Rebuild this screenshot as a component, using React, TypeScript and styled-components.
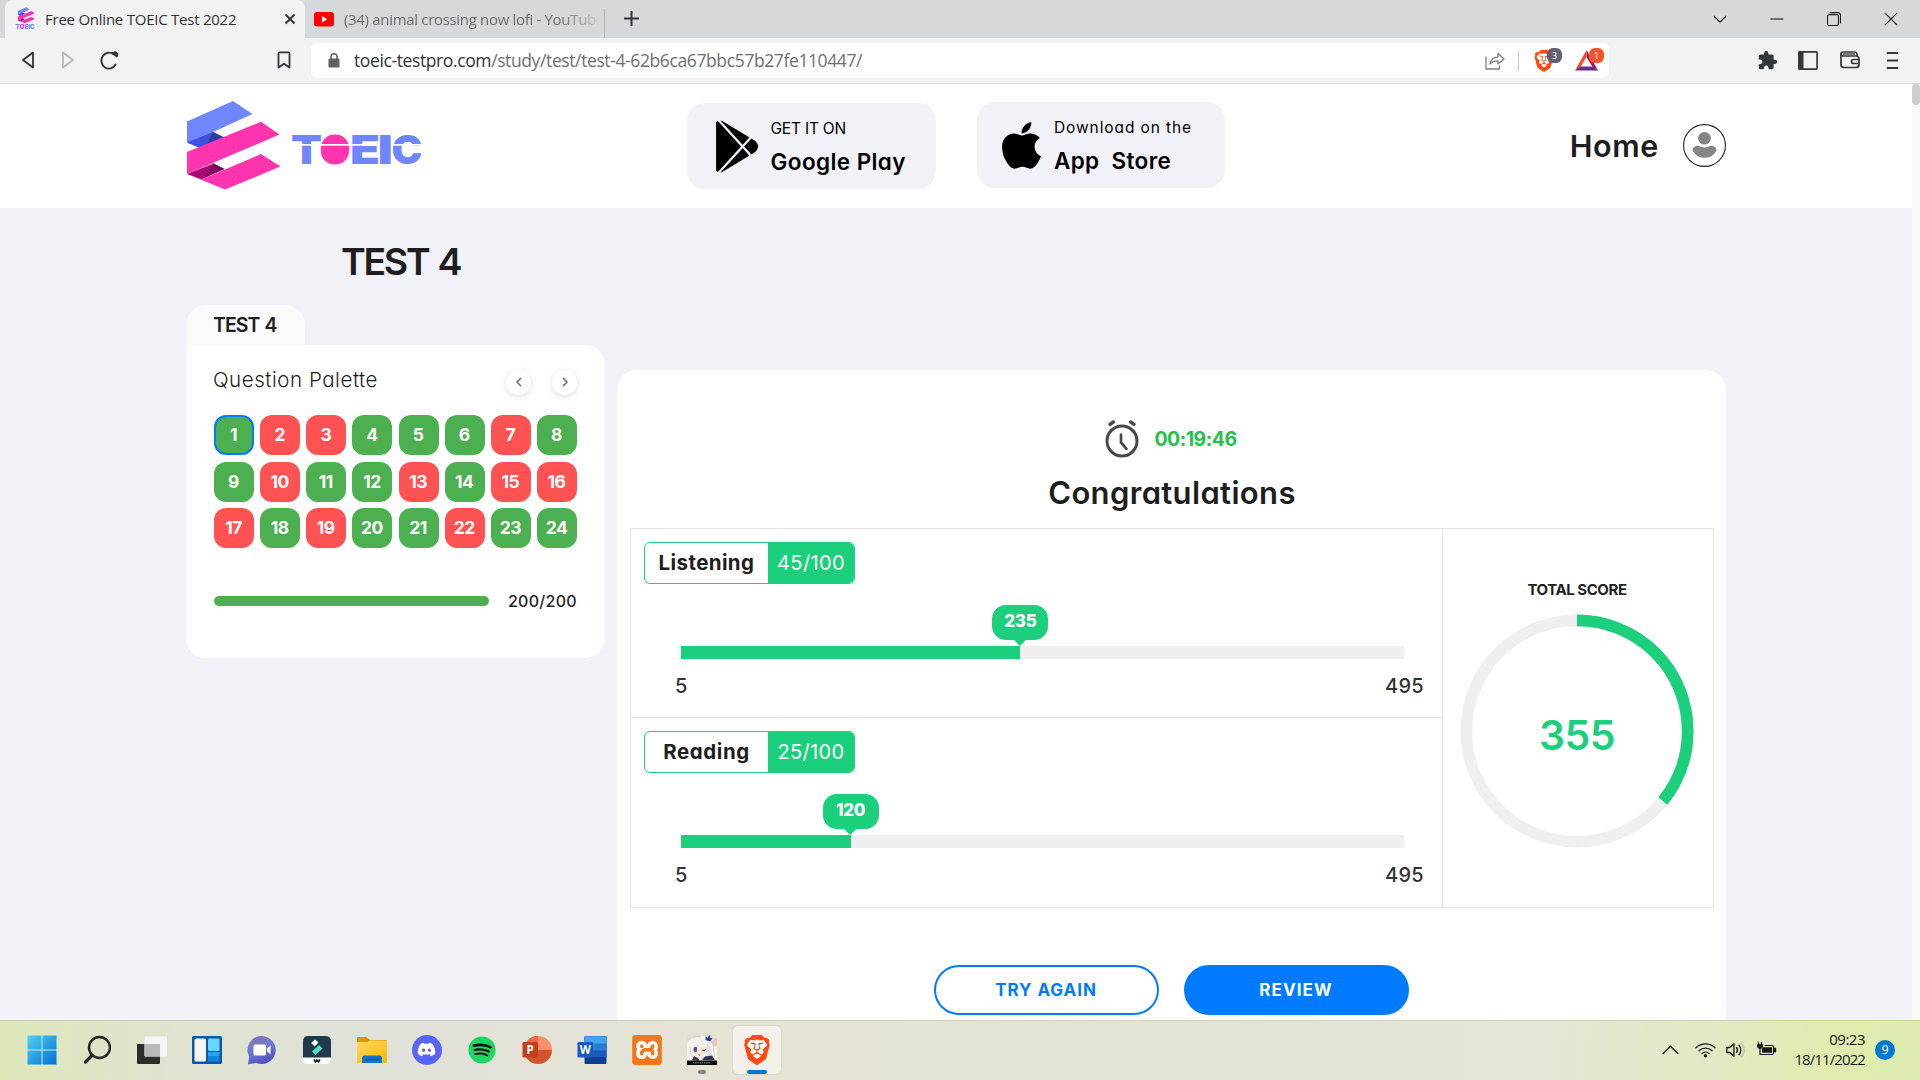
import React from 'react';
import styled, { createGlobalStyle, css } from 'styled-components';
import { SiBrave, SiXampp } from 'react-icons/si';
import { FaApple, FaDiscord, FaSpotify } from 'react-icons/fa';
import { MdExtension } from 'react-icons/md';

const GlobalStyle = createGlobalStyle`
  *, *::before, *::after { box-sizing: border-box; }
  body {
    margin: 0;
    overflow: hidden;
    font-family: Inter, "Open Sans", sans-serif;
    font-feature-settings: "cv11";
    color: #1e1e1e;
  }
  svg { display: block; flex: none; }
`;

const uiFont = css`
  font-family: "Open Sans", "Noto Sans", sans-serif;
  font-feature-settings: normal;
`;

const Screen = styled.div`
  width: 1920px;
  height: 1080px;
  overflow: hidden;
  display: flex;
  flex-direction: column;
`;

/* ---------- Browser chrome ---------- */

const TabStrip = styled.div`
  ${uiFont}
  height: 38px;
  flex: none;
  display: flex;
  align-items: stretch;
  background: #d5d9dc;
  padding-left: 5px;
  font-size: 15px;
`;

const ActiveTab = styled.div`
  width: 300px;
  display: flex;
  align-items: center;
  padding: 0 9px 1px 10px;
  gap: 10px;
  background: #f2f2f2;
  border-radius: 8px 8px 0 0;
  color: #2f3133;
`;

const TabTitle = styled.span`
  flex: 1;
  white-space: nowrap;
  letter-spacing: -0.24px;
`;

const IdleTab = styled.div`
  width: 299px;
  display: flex;
  align-items: center;
  padding: 0 0 1px 9px;
  gap: 10px;
  color: #6a6d70;
`;

const FadingTitle = styled.span`
  width: 253px;
  overflow: hidden;
  white-space: nowrap;
  letter-spacing: -0.32px;
  mask-image: linear-gradient(to right, #000 85%, transparent 103%);
`;

const TabDivider = styled.div`
  width: 1px;
  margin: 9px 0 0;
  background: #b2b5b8;
`;

const NewTab = styled.div`
  margin-left: 19px;
  display: flex;
  align-items: center;
  padding-bottom: 1px;
`;

const WindowControls = styled.div`
  margin-left: auto;
  display: flex;
  align-items: center;
  gap: 43px;
  padding: 0 22px 1px 0;
`;

const Toolbar = styled.div`
  ${uiFont}
  height: 46px;
  flex: none;
  display: flex;
  align-items: center;
  padding-left: 20px;
  background: #f2f2f2;
  border-bottom: 1px solid #d6d7d8;
`;

const NavButtons = styled.div`
  width: 291px;
  padding-bottom: 1px;
  display: flex;
  align-items: center;
  gap: 24px;
`;

const BookmarkSlot = styled.div`
  margin-left: auto;
  margin-right: 20px;
`;

const AddressBar = styled.div`
  width: 1298px;
  height: 35px;
  display: flex;
  align-items: center;
  padding: 0 5px 0 17px;
  background: #fff;
  border-radius: 6px;
`;

const Url = styled.div`
  margin-left: 14px;
  flex: 1;
  font-size: 17.5px;
  line-height: 32px;
  padding-bottom: 2px;
  letter-spacing: -0.39px;
  white-space: nowrap;
  color: #6c6f73;
`;

const Domain = styled.span`
  color: #303336;
`;

const AddressDivider = styled.div`
  width: 1px;
  height: 20px;
  margin: 0 14px 0 13px;
  background: #c8c8c8;
`;

const ShieldButton = styled.div<{ $w: number; $right?: number }>`
  position: relative;
  width: ${(p) => p.$w}px;
  height: 24px;
  margin-right: ${(p) => p.$right ?? 0}px;
  display: flex;
  align-items: center;
`;

const CountBadge = styled.span<{ $bg: string }>`
  position: absolute;
  top: -1px;
  right: 0;
  width: 15px;
  height: 15px;
  border-radius: 6px;
  background: ${(p) => p.$bg};
  color: #fff;
  font-size: 9.5px;
  line-height: 15px;
  text-align: center;
`;

const ToolbarActions = styled.div`
  margin-left: auto;
  padding: 0 22px 1px 0;
  display: flex;
  align-items: center;
`;

const ActionSlot = styled.div<{ $gap: number }>`
  margin-left: ${(p) => p.$gap}px;
`;

/* ---------- Page ---------- */

const Viewport = styled.div`
  height: 936px;
  flex: none;
  display: flex;
`;

const Page = styled.div`
  width: 1912px;
  height: 936px;
  overflow: hidden;
  background: #f1f2f7;
`;

const ScrollTrack = styled.div`
  width: 8px;
  background: #f9f9f9;
`;

const ScrollThumb = styled.div`
  height: 21px;
  border-radius: 4px;
  background: #cdcdcd;
`;

const Header = styled.header`
  height: 124px;
  display: flex;
  align-items: flex-start;
  padding: 17px 186px 0 187px;
  background: #fff;
`;

const Brand = styled.div`
  width: 500px;
`;

const StoreBadge = styled.div<{ $w: number; $pad: number; $gap: number }>`
  width: ${(p) => p.$w}px;
  height: 86px;
  margin-top: 2px;
  margin-right: 41px;
  padding-left: ${(p) => p.$pad}px;
  display: flex;
  align-items: center;
  gap: ${(p) => p.$gap}px;
  background: #f1f2f7;
  border-radius: 18px;
  color: #000;

  & + & { margin-top: 1px; }
`;

const StoreText = styled.div`
  display: flex;
  flex-direction: column;
  margin-bottom: 1px;
`;

const StoreHint = styled.span<{ $ls: number }>`
  font-size: 15.5px;
  line-height: 32px;
  letter-spacing: ${(p) => p.$ls}px;
  white-space: pre;
`;

const StoreName = styled.span<{ $ls: number }>`
  font-size: 22.5px;
  font-weight: 600;
  line-height: 33px;
  letter-spacing: ${(p) => p.$ls}px;
  white-space: pre;
`;

const HeaderNav = styled.nav`
  height: 84px;
  margin-top: 2.5px;
  margin-left: auto;
  display: flex;
  align-items: center;
  gap: 24px;
`;

const HomeLink = styled.a`
  font-size: 30.5px;
  font-weight: 600;
  letter-spacing: 0.6px;
  line-height: 40px;
`;

const PageTitle = styled.h1`
  height: 97px;
  margin: 0 0 0 341px;
  padding-top: 24px;
  font-size: 37.5px;
  font-weight: 600;
  line-height: 60px;
  letter-spacing: -2.3px;
  word-spacing: 2px;
`;

const Columns = styled.main`
  display: flex;
  align-items: flex-start;
  gap: 12px;
  padding-left: 186px;
`;

const Sidebar = styled.aside`
  width: 419px;
`;

const TestTab = styled.div`
  width: 119px;
  height: 40px;
  padding-left: 27px;
  background: #fafafa;
  border-radius: 20px 20px 0 0;
  font-size: 19.5px;
  font-weight: 600;
  line-height: 40px;
  letter-spacing: -0.95px;
  word-spacing: 1px;
`;

const PaletteCard = styled.section`
  height: 313px;
  padding: 22px 28px 0;
  background: #fff;
  border-radius: 0 20px 20px 20px;
`;

const PaletteHead = styled.div`
  display: flex;
  align-items: center;
  height: 30px;
`;

const PaletteTitle = styled.h2`
  margin: -4px auto 0 -1px;
  font-size: 20.5px;
  font-weight: 300;
  line-height: 26px;
  letter-spacing: 0.55px;
`;

const RoundButton = styled.button`
  width: 25px;
  height: 25px;
  margin: 0 0 0 21px;
  padding: 0;
  display: flex;
  align-items: center;
  justify-content: center;
  border: 0;
  border-radius: 50%;
  background: #fff;
  box-shadow: 0 2px 7px rgba(0, 0, 0, 0.13);
`;

const QuestionGrid = styled.div`
  margin-top: 18px;
  display: grid;
  grid-template-columns: repeat(8, 40px);
  justify-content: space-between;
  row-gap: 6.5px;
`;

const Question = styled.button<{ $ok: boolean; $current: boolean }>`
  height: 40px;
  padding: 0 1px 0 0;
  border: ${(p) => (p.$current ? '2px solid #007bff' : '0')};
  border-radius: 12px;
  background: ${(p) => (p.$ok ? '#4caf50' : '#ff5252')};
  color: #fff;
  font: 700 17.5px/36px Inter, sans-serif;
  letter-spacing: -0.5px;
  text-align: center;
`;

const Progress = styled.div`
  margin-top: 38px;
  display: flex;
  align-items: center;
  justify-content: space-between;
  height: 30px;
`;

const ProgressBar = styled.div`
  width: 275px;
  height: 10px;
  border-radius: 5px;
  background: #4caf50;
`;

const ProgressCount = styled.span`
  font-size: 16px;
  font-weight: 500;
  letter-spacing: 0.3px;
  color: #212529;
`;

const ResultCard = styled.section`
  width: 1109px;
  height: 700px;
  margin-top: 65px;
  padding: 49px 12px 0 13px;
  background: #fff;
  border-radius: 20px 20px 0 0;
`;

const Timer = styled.div`
  height: 39px;
  display: flex;
  align-items: center;
  justify-content: center;
  gap: 15px;
  padding-right: 2px;
`;

const TimeSpent = styled.span`
  font-size: 19.5px;
  font-weight: 700;
  letter-spacing: -0.5px;
  color: #28bf4b;
`;

const Congrats = styled.h2`
  margin: 15px 0 0;
  height: 55px;
  text-align: center;
  font-size: 31px;
  font-weight: 600;
  line-height: 40px;
  letter-spacing: 0.35px;
`;

const ScoreTable = styled.div`
  height: 380px;
  display: grid;
  grid-template-columns: 812px 1fr;
  border: 1px solid #e2e3e4;
`;

const Sections = styled.div`
  display: grid;
  grid-template-rows: 188px 1fr;
  border-right: 1px solid #e2e3e4;
`;

const Section = styled.div`
  padding: 13px 18px 0 13px;

  & + & { border-top: 1px solid #e2e3e4; }
`;

const Tag = styled.div`
  display: flex;
  width: fit-content;
  height: 42px;
  border: 1px solid #1bcf7c;
  border-radius: 6px;
  overflow: hidden;
`;

const TagName = styled.span<{ $ls: number }>`
  width: 123px;
  text-align: center;
  font-size: 20.5px;
  font-weight: 650;
  line-height: 40px;
  letter-spacing: ${(p) => p.$ls}px;
`;

const TagScore = styled.span`
  width: 86px;
  text-align: center;
  background: #1bcf7c;
  color: #fff;
  font-size: 20px;
  line-height: 40px;
  letter-spacing: 0.36px;
`;

const Meter = styled.div`
  width: 723px;
  height: 13px;
  margin: 62px 0 0 37px;
  background: #efefef;
`;

const MeterFill = styled.div`
  position: relative;
  height: 13px;
  background: #1bcf7c;
`;

const Bubble = styled.div`
  position: absolute;
  right: -28px;
  bottom: 19px;
  width: 56px;
  height: 35px;
  border-radius: 14px;
  background: #1bcf7c;
  color: #fff;
  text-align: center;
  font-size: 17px;
  font-weight: 800;
  line-height: 33px;
  letter-spacing: -0.3px;

  &::after {
    content: '';
    position: absolute;
    left: 20.5px;
    top: 34px;
    border: 7.5px solid transparent;
    border-top-color: #1bcf7c;
    border-bottom: 0;
  }
`;

const Bounds = styled.div`
  display: flex;
  justify-content: space-between;
  margin: 15px 0 0 31px;
  font-size: 20px;
  font-weight: 550;
  line-height: 24px;
  letter-spacing: 0.3px;
  color: #333;
`;

const Total = styled.div`
  padding: 51px 2px 0 0;
  display: flex;
  flex-direction: column;
  align-items: center;
`;

const TotalLabel = styled.div`
  font-size: 15px;
  font-weight: 650;
  line-height: 20px;
  letter-spacing: -0.44px;
`;

const Gauge = styled.div`
  margin-top: 14px;
  display: grid;
  place-items: center;

  & > * { grid-area: 1 / 1; }
`;

const TotalValue = styled.div`
  margin-top: 8px;
  font-size: 41px;
  font-weight: 600;
  letter-spacing: -0.6px;
  color: #1bcf7c;
`;

const Actions = styled.div`
  margin-top: 57px;
  padding-right: 2px;
  display: flex;
  justify-content: center;
  gap: 25px;
`;

const PillButton = styled.button<{ $solid?: boolean; $ls: number }>`
  width: 225px;
  height: 50px;
  padding: 0;
  border: 2px solid #007bff;
  border-radius: 25px;
  background: ${(p) => (p.$solid ? '#007bff' : '#fff')};
  color: ${(p) => (p.$solid ? '#fff' : '#007bff')};
  font: 700 17px/44px Inter, sans-serif;
  letter-spacing: ${(p) => p.$ls}px;
`;

/* ---------- Taskbar ---------- */

const TaskbarRow = styled.footer`
  ${uiFont}
  height: 60px;
  flex: none;
  display: flex;
  padding: 0 25px 0 14px;
  border-top: 1px solid rgba(120, 120, 100, 0.2);
  background: linear-gradient(95deg, #dde7b9 0%, #dfe3cf 9%, #e0e1d9 20%, #e4e2d6 30%, #e7e4d6 42%, #e4e4d4 55%, #e5e6d6 80%, #e3e9c4 89%, #dfecad 96%, #dcebb0 100%);
`;

const TaskItem = styled.div`
  width: 55.05px;
  height: 59px;
  padding-top: 5px;
  display: flex;
  flex-direction: column;
  align-items: center;
`;

const TaskTile = styled.div<{ $active?: boolean }>`
  width: 48px;
  height: 48px;
  display: grid;
  place-items: center;
  padding-bottom: 1px;
  border-radius: 5px;
  ${(p) =>
    p.$active &&
    css`
      background: #f3f1ea;
      box-shadow: 0 0 2px rgba(0, 0, 0, 0.18);
    `}
`;

const RunMark = styled.div<{ $active?: boolean }>`
  width: ${(p) => (p.$active ? 20 : 8)}px;
  height: 4px;
  margin-top: -4px;
  z-index: 1;
  border-radius: 2px;
  background: ${(p) => (p.$active ? '#0078d4' : '#85857f')};
`;

const TileLayer = styled.div<{ $bg?: string; $fg: string; $round?: number }>`
  width: 30px;
  height: 30px;
  display: grid;
  place-items: center;
  border-radius: ${(p) => p.$round ?? 0}px;
  background: ${(p) => p.$bg ?? 'none'};
  color: ${(p) => p.$fg};
`;

const Tray = styled.div`
  margin-left: auto;
  padding-bottom: 2px;
  display: flex;
  align-items: center;
  color: #1a1a1a;
`;

const TrayIcons = styled.div`
  display: flex;
  align-items: center;
  gap: 10px;
  margin-right: 17px;
`;

const Clock = styled.div`
  width: 71px;
  margin: 0 10px 2px 0;
  text-align: right;
  font-size: 15px;
  line-height: 20px;
`;

const Time = styled.div`
  letter-spacing: -0.5px;
`;

const DateText = styled.div`
  letter-spacing: -0.9px;
`;

const NoticeCount = styled.div`
  width: 20px;
  height: 20px;
  border-radius: 50%;
  background: #0078d4;
  color: #fff;
  text-align: center;
  font-size: 12.5px;
  line-height: 20px;
`;

/* ---------- Drawings ---------- */

const EMark = () => (
  <>
    <polygon points="0,20.5 46,0 65.5,13 26,31 37,36.5 13,47 0,41.5" fill="#7086ff" />
    <polygon points="0,41.5 26,31 37,36.5 13,47" fill="#3d52dc" />
    <polygon points="26,31 37,36.5 20,43" fill="#2c3ba6" />
    <polygon points="0,51 74,20.8 92.5,33.5 0,73" fill="#ff34ae" />
    <polygon points="0,73 26.5,62.5 37.5,68 14.5,78.5" fill="#a80a74" />
    <polygon points="26.5,62.5 37.5,68 18,76" fill="#85055c" />
    <polygon points="0,73 14.5,78.5 74,53 93.5,65.5 38,88.5" fill="#ff34ae" />
  </>
);

const Logo = () => (
  <svg width="236" height="90" viewBox="0 0 236 90">
    <EMark />
    <g fontFamily="Inter, sans-serif" fontWeight="900" fontSize="39.5" fill="#7086ff">
      <text x="104" y="63" textLength="31" lengthAdjust="spacingAndGlyphs">T</text>
      <text x="163" y="63" textLength="30" lengthAdjust="spacingAndGlyphs">E</text>
      <text x="190.5" y="63" textLength="15.5" lengthAdjust="spacingAndGlyphs">I</text>
      <text x="204.5" y="63" textLength="31" lengthAdjust="spacingAndGlyphs">C</text>
      <text x="133" y="63" textLength="30" lengthAdjust="spacingAndGlyphs" fill="#ff34ae" stroke="#ff34ae" strokeWidth="1">O</text>
      <ellipse cx="148" cy="48.7" rx="9" ry="11" fill="#ff34ae" />
    </g>
    <rect x="104" y="43" width="87" height="1.7" fill="#fff" />
    <rect x="205" y="43" width="30" height="1.7" fill="#fff" />
  </svg>
);

const Favicon = () => (
  <svg width="20" height="24" viewBox="0 0 110 130">
    <g transform="translate(16 0)">
      <EMark />
    </g>
    <g fontFamily="Inter, sans-serif" fontWeight="900" fontSize="32" fill="#7086ff">
      <text x="3" y="122" textLength="104" lengthAdjust="spacingAndGlyphs">
        T<tspan fill="#ff34ae">O</tspan>EIC
      </text>
    </g>
  </svg>
);

const YoutubeIcon = () => (
  <svg width="20" height="16" viewBox="0 0 20 16">
    <rect y="1" width="20" height="14.5" rx="3" fill="#f00" />
    <path d="M8 5l5.2 3.2L8 11.4z" fill="#fff" />
  </svg>
);

const CrossIcon = () => (
  <svg width="12" height="12" viewBox="0 0 12 12" stroke="#303336" strokeWidth="1.8">
    <path d="M1.5 1.5l9 9M10.5 1.5l-9 9" />
  </svg>
);

const PlusIcon = () => (
  <svg width="15" height="15" viewBox="0 0 15 15" stroke="#303336" strokeWidth="2">
    <path d="M7.5 0v15M0 7.5h15" />
  </svg>
);

const Caption = ({ d }: { d: string }) => (
  <svg width="14" height="14" viewBox="0 0 14 14" fill="none" stroke="#1b1b1b" strokeWidth="1.1">
    <path d={d} />
  </svg>
);

const BackIcon = ({ color, flip }: { color: string; flip?: boolean }) => (
  <svg width="16" height="18" viewBox="0 0 16 18" fill="none" stroke={color} strokeWidth="1.8" strokeLinejoin="round">
    <path d={flip ? 'M3 1.5v15l10-7.5z' : 'M13 1.5v15L3 9z'} />
  </svg>
);

const ReloadIcon = () => (
  <svg width="19" height="20" viewBox="0 0 19 20" fill="none" stroke="#303336" strokeWidth="1.9" strokeLinecap="round">
    <path d="M15.5 14.5A7.5 8 0 1 1 13.500 4.300" />
    <path d="M12.500 2.500q3-1.500 4.500 0t0 4.500q-3-1-4.500-4.500z" fill="#303336" strokeWidth="1" />
  </svg>
);

const BookmarkIcon = () => (
  <svg width="14" height="18" viewBox="0 0 14 18" fill="none" stroke="#303336" strokeWidth="1.8" strokeLinejoin="round">
    <path d="M1.5 2.5a1.2 1.2 0 0 1 1.2-1.2h8.6a1.2 1.2 0 0 1 1.2 1.2v14L7 12.7l-5.5 3.8z" />
  </svg>
);

const LockIcon = () => (
  <svg width="12" height="15" viewBox="0 0 12 15">
    <rect x="0.5" y="5.5" width="11" height="9" rx="1.2" fill="#5f6368" />
    <path d="M3 6V3.8a3 3 0 0 1 6 0V6" fill="none" stroke="#5f6368" strokeWidth="1.6" />
  </svg>
);

const ShareIcon = () => (
  <svg width="20" height="18" viewBox="0 0 20 18" fill="none" stroke="#7d8084" strokeWidth="1.3" strokeLinejoin="round">
    <path d="M1 4.5V17h13.5v-3.5" />
    <path d="M5 12c.6-4.200 3.500-6.700 8-6.900V1.200L19 7l-6 5V8.800c-3.700 0-6 .8-8 3.200z" />
  </svg>
);

const BatIcon = () => (
  <svg width="23" height="21" viewBox="0 0 23 21">
    <polygon points="11.500,0 0,20.500 5.500,17 11.500,7" fill="#ff4724" />
    <polygon points="11.500,0 23,20.500 17.500,17 11.500,7" fill="#9e1f63" />
    <polygon points="0,20.500 23,20.500 17.500,16.500 5.500,16.500" fill="#662d91" />
  </svg>
);

const PanelIcon = () => (
  <svg width="20" height="19" viewBox="0 0 20 19">
    <rect x="0.9" y="0.9" width="18.200" height="17.200" rx="1" fill="none" stroke="#34373a" strokeWidth="1.7" />
    <rect x="0.5" y="0.5" width="5" height="18" fill="#34373a" />
  </svg>
);

const WalletIcon = () => (
  <svg width="20" height="18" viewBox="0 0 20 18" fill="none" stroke="#34373a" strokeWidth="1.7">
    <path d="M1 3v10.500A3 3 0 0 0 4 16.500h12a3 3 0 0 0 3-3V8a3 3 0 0 0-3-3H3a2 2 0 0 1 0-4h11.500A2.500 2.500 0 0 1 17 3.500V5" />
    <path d="M3 3h12" strokeWidth="1.3" />
    <path d="M19 8.500h-5.500a2 2 0 0 0 0 4H19" />
  </svg>
);

const MenuIcon = () => (
  <svg width="11" height="17" viewBox="0 0 11 17" stroke="#34373a" strokeWidth="1.900">
    <path d="M0 1h11M0 8.500h11M0 16h11" />
  </svg>
);

const PlayIcon = () => (
  <svg width="45.500" height="55" viewBox="0 0 44 55" preserveAspectRatio="none">
    <path d="M1 3.500Q3 .5 7 2L39 22Q44.500 27.500 39 33L7 53Q3 54.500 1 51.500Z" fill="#000" />
    <path d="M2.500 0L36 38M2.500 55L36 17" stroke="#f1f2f7" strokeWidth="2.200" />
  </svg>
);

const AvatarIcon = () => (
  <svg width="43" height="43" viewBox="0 0 43 43">
    <circle cx="21.500" cy="21.500" r="20.900" fill="#fff" stroke="#222" strokeWidth="1.100" />
    <circle cx="21.500" cy="14.300" r="6.300" fill="#858585" />
    <path d="M15 21.500c2 1.300 4 1.900 6.500 1.900s4.500-.6 6.500-1.900c3 .2 5.300 2 5.600 4.700-2.600 5-6.900 7.600-12.100 7.600S12 31.200 9.400 26.200c.3-2.700 2.600-4.500 5.600-4.700z" fill="#858585" />
  </svg>
);

const ArrowIcon = ({ next }: { next?: boolean }) => (
  <svg width="8" height="10" viewBox="0 0 8 10" fill="none" stroke="#6a6a6a" strokeWidth="1.500">
    <path d={next ? 'M2 1l4 4-4 4' : 'M6 1L2 5l4 4'} />
  </svg>
);

const AlarmIcon = () => (
  <svg width="34" height="38" viewBox="0 0 34 38" fill="none" stroke="#484848" strokeLinecap="round">
    <circle cx="17" cy="21" r="15" strokeWidth="3" />
    <path d="M5 4.300L8.300 2M29 4.300L25.700 2" strokeWidth="3.400" />
    <path d="M16 14.500v8l5.500 6.300" strokeWidth="2.700" strokeLinejoin="round" />
  </svg>
);

const RADIUS = 110.7;
const TOTAL = 355;
const TOTAL_MAX = 990;

const GaugeRing = () => {
  const length = 2 * Math.PI * RADIUS;
  return (
    <svg width="234" height="234" viewBox="-117 -117 234 234" fill="none" strokeWidth="11.700">
      <circle r={RADIUS} stroke="#efefef" />
      <circle r={RADIUS} stroke="#1bcf7c" transform="rotate(-90)" strokeDasharray={`${(length * TOTAL) / TOTAL_MAX} ${length}`} />
    </svg>
  );
};

const WindowsIcon = () => (
  <svg width="30" height="30" viewBox="0 0 30 30">
    <defs>
      <linearGradient id="win" x1="0" y1="0" x2="1" y2="1">
        <stop offset="0" stopColor="#4fd0fb" />
        <stop offset="1" stopColor="#0370cc" />
      </linearGradient>
    </defs>
    <path d="M.5.5h14v14H.5zM15.500.5h14v14h-14zM.5 15.500h14v14H.5zM15.500 15.500h14v14h-14z" fill="url(#win)" />
  </svg>
);

const SearchIcon = () => (
  <svg width="28" height="30" viewBox="0 0 28 30" fill="none" stroke="#262626" strokeLinecap="round">
    <circle cx="16.500" cy="12.500" r="10.500" strokeWidth="2.400" />
    <path d="M9 20.500L2.500 27" strokeWidth="3.200" />
  </svg>
);

const TaskViewIcon = () => (
  <svg width="30" height="30" viewBox="0 0 30 30">
    <rect x="0" y="9" width="23" height="20" rx="1" fill="#2d2d2d" />
    <rect x="7.500" y="1.500" width="22.500" height="20" rx="1" fill="#f6f6f6" />
    <rect x="7.500" y="9" width="15.500" height="12.500" fill="#b9b9b9" />
  </svg>
);

const WidgetsIcon = () => (
  <svg width="30" height="28" viewBox="0 0 30 28">
    <rect width="30" height="28" rx="1.500" fill="#0c5aa6" />
    <rect x="2.500" y="2.500" width="11.500" height="23" rx="1.500" fill="#f5f5f5" />
    <rect x="16" y="2.500" width="11.500" height="12.500" rx="1" fill="#67d6fb" />
    <rect x="16" y="16" width="11.500" height="4.500" fill="#2aa5f5" />
    <rect x="16" y="21" width="11.500" height="4.500" fill="#0a84e8" />
  </svg>
);

const ChatIcon = () => (
  <svg width="30" height="30" viewBox="0 0 30 30">
    <defs>
      <linearGradient id="chat" x1="0.2" y1="0" x2="0.600" y2="1">
        <stop offset="0" stopColor="#8a6bb8" />
        <stop offset="0.400" stopColor="#6f7fd0" />
        <stop offset="1" stopColor="#4f4fc4" />
      </linearGradient>
    </defs>
    <path d="M15 1a14 14 0 1 1-5.500 27L1 29.200l1.200-7.500A14 14 0 0 1 15 1z" fill="url(#chat)" />
    <rect x="6.500" y="9.500" width="12.500" height="11" rx="1.500" fill="#fff" />
    <path d="M20 13.500l3.500-3v9l-3.500-3z" fill="#fff" />
  </svg>
);

const FilmoraIcon = () => (
  <svg width="28" height="28" viewBox="0 0 28 28">
    <rect width="28" height="28" rx="5" fill="#1f3a4a" />
    <path d="M0 21.500h28V24a4 4 0 0 1-4 4H4a4 4 0 0 1-4-4z" fill="#fff" />
    <path d="M12 3.500l3.500 3-3.800 4L8.200 7z" fill="#fff" />
    <path d="M16 9l3.500 3.500-7 6.500L9 15.500z" fill="#55dfc2" />
    <path d="M11 23.500l1.500 2.500 1.500-2 1.500 2 1.500-2.500" fill="none" stroke="#111" strokeWidth="1.500" />
  </svg>
);

const FolderIcon = () => (
  <svg width="30" height="28" viewBox="0 0 30 28">
    <defs>
      <linearGradient id="folder" x1="0" y1="0" x2="1" y2="1">
        <stop offset="0" stopColor="#ffd75e" />
        <stop offset="1" stopColor="#fbb70d" />
      </linearGradient>
    </defs>
    <path d="M0 2.500Q0 1 1.500 1H9.500l3.500 3H29q1 0 1 1v5H0z" fill="#d9980b" />
    <path d="M0 6h10l3-1.500h17V27H0z" fill="url(#folder)" />
    <path d="M5 27v-5q0-2.500 2.500-2.500h15Q25 19.500 25 22v5z" fill="#1272c4" />
    <path d="M8.500 23.500h13" stroke="#0b4f91" strokeWidth="1.200" />
  </svg>
);

const PowerPointIcon = () => (
  <svg width="30" height="30" viewBox="0 0 30 30">
    <path d="M16 1a14 14 0 1 0 14 14H16z" fill="#d35230" />
    <path d="M16 1a14 14 0 0 1 14 14H16z" fill="#ff8f6b" />
    <path d="M16 1A14 14 0 0 0 2 15h14z" fill="#ed6c47" />
    <rect x="0.500" y="7" width="15.500" height="15.500" rx="1.200" fill="#c43e1c" />
    <text x="8.200" y="19.200" textAnchor="middle" fontFamily="Open Sans, sans-serif" fontWeight="700" fontSize="11.500" fill="#fff">P</text>
  </svg>
);

const WordIcon = () => (
  <svg width="30" height="30" viewBox="0 0 30 30">
    <rect x="7.500" y="1.500" width="22" height="27.500" rx="1.200" fill="#103f91" />
    <rect x="7.500" y="1.500" width="22" height="20.500" fill="#185abd" />
    <rect x="7.500" y="1.500" width="22" height="14" fill="#2b7cd3" />
    <rect x="7.500" y="1.500" width="22" height="7" rx="1" fill="#41a5ee" />
    <rect x="0.500" y="7" width="15.500" height="15.500" rx="1.200" fill="#185abd" />
    <text x="8.200" y="19" textAnchor="middle" fontFamily="Open Sans, sans-serif" fontWeight="700" fontSize="11.500" fill="#fff">W</text>
  </svg>
);

const GameIcon = () => (
  <svg width="30" height="30" viewBox="0 0 30 30">
    <rect width="30" height="30" fill="#e4ddd2" />
    <path d="M0 9Q5 0 15 1t15 8v17H0z" fill="#f6f3ee" />
    <path d="M24 6l6-3v8l-4 1z" fill="#e9c8b4" />
    <path d="M6 11q6-4 14 1l.5 5q-3 6-7 6.500T6.500 18z" fill="#fbe7db" />
    <path d="M4 11q5-7 15-3l-3 4-2-2-3 4-1-3-3 3-1 6-4-2z" fill="#f3efec" />
    <path d="M20 8l4 5 1 10-4 2-2-6 1-5z" fill="#dedde6" />
    <path d="M6 3q4-3 8-1M3 12q0 7 3 11M26 13q2 5 1 10" fill="none" stroke="#c9c3c4" strokeWidth="0.800" />
    <path d="M6.500 13q2-2 3.500-.5v4q-2 1.200-3.300-.5z" fill="#4a4fa0" />
    <path d="M15 15q2 1.600 4-.6" fill="none" stroke="#4d3b49" strokeWidth="1" />
    <path d="M11 19.300l2.800.4-1.500 1.300z" fill="#b4555a" />
    <path d="M18.500 1.500l2 1.300L22.500 0l1 3 2 .5-2.500 3-4.500-1.500z" fill="#2c4596" />
    <path d="M15 25l3-3.500 7-1 3 5z" fill="#2f3557" />
    <path d="M5 25l2-4 5 3v2z" fill="#3a3a45" />
    <rect y="25.500" width="30" height="4.500" fill="#0a0a0a" />
    <path d="M6 27.800h18" stroke="#999" strokeWidth="1" strokeDasharray="1.500 0.700" />
  </svg>
);

const XamppTile = () => (
  <TileLayer $bg="#fff" $fg="#f0761f" $round={4}>
    <SiXampp size={30} />
  </TileLayer>
);

const SpotifyTile = () => (
  <TileLayer $fg="#1ed760">
    <svg width="28" height="28" viewBox="0 0 28 28">
      <circle cx="14" cy="14" r="12.500" fill="#111" />
      <FaSpotify size={28} />
    </svg>
  </TileLayer>
);

const BraveGlyph = ({ size }: { size: number }) => (
  <svg width={size} height={size} viewBox="0 0 30 30">
    <path d="M7 6h16l1.500 8-4 10-5.500 4-5.500-4-4-10z" fill="#fff" />
    <g color="#fb4b12">
      <SiBrave size={30} />
    </g>
  </svg>
);

const ChevronUp = () => (
  <svg width="17" height="10" viewBox="0 0 17 10" fill="none" stroke="#1a1a1a" strokeWidth="1.400">
    <path d="M.7 9l7.800-7.800L16.300 9" />
  </svg>
);

const WifiIcon = () => (
  <svg width="21" height="16" viewBox="0 0 21 16" fill="none" stroke="#1a1a1a" strokeWidth="1.300" strokeLinecap="round">
    <path d="M1 5.700a13.500 13.500 0 0 1 19 0M4 8.700a9.300 9.300 0 0 1 13 0M6.900 11.600a5.200 5.200 0 0 1 7.200 0" />
    <circle cx="10.500" cy="13.800" r="1.700" fill="#1a1a1a" stroke="none" />
  </svg>
);

const VolumeIcon = () => (
  <svg width="20" height="16" viewBox="0 0 20 16" fill="none" stroke="#1a1a1a" strokeWidth="1.300" strokeLinecap="round" strokeLinejoin="round">
    <path d="M.8 5.500h3L8 1.800v12.400L3.800 10.500h-3zM10.500 5.500a3.800 3.800 0 0 1 0 5M13 3.300a7 7 0 0 1 0 9.400" />
    <path d="M15.500 1.200a10 10 0 0 1 0 13.600" stroke="#b9bfa5" />
  </svg>
);

const BatteryIcon = () => (
  <svg width="21" height="17" viewBox="0 0 21 17">
    <path d="M1.500 3.500h5V6L5 7.500H3L1.500 6z" fill="#1a1a1a" stroke="#1a1a1a" />
    <path d="M2.500 1v2.500M5.500 1v2.500M4 7v6.500h12a1.500 1.500 0 0 0 1.500-1.500V6A1.500 1.500 0 0 0 16 4.500H8.500" fill="none" stroke="#1a1a1a" strokeWidth="1.200" />
    <rect x="6" y="6.300" width="10" height="5.500" rx="0.500" fill="#1a1a1a" />
    <path d="M18.500 7h1.200v4h-1.200z" fill="#1a1a1a" stroke="#1a1a1a" />
  </svg>
);

/* ---------- Data ---------- */

const QUESTION_COUNT = 24;
const WRONG = new Set([2, 3, 7, 10, 13, 15, 16, 17, 19, 22]);

const SECTIONS = [
  { name: 'Listening', correct: 45, score: 235, ls: 0.4 },
  { name: 'Reading', correct: 25, score: 120, ls: 0.6 },
];

const MIN_SCORE = 5;
const MAX_SCORE = 495;

const PINNED = [
  { id: 'start', icon: <WindowsIcon /> },
  { id: 'search', icon: <SearchIcon /> },
  { id: 'taskview', icon: <TaskViewIcon /> },
  { id: 'widgets', icon: <WidgetsIcon /> },
  { id: 'chat', icon: <ChatIcon /> },
  { id: 'filmora', icon: <FilmoraIcon /> },
  { id: 'files', icon: <FolderIcon /> },
  { id: 'discord', icon: <TileLayer $bg="#5865f2" $fg="#fff" $round={15}><FaDiscord size={19} /></TileLayer> },
  { id: 'spotify', icon: <SpotifyTile /> },
  { id: 'powerpoint', icon: <PowerPointIcon /> },
  { id: 'word', icon: <WordIcon /> },
  { id: 'xampp', icon: <XamppTile /> },
  { id: 'game', icon: <GameIcon />, running: true },
  { id: 'brave', icon: <BraveGlyph size={30} />, running: true, active: true },
];

export default function App() {
  return (
    <Screen>
      <GlobalStyle />
      <TabStrip>
        <ActiveTab>
          <Favicon />
          <TabTitle>Free Online TOEIC Test 2022</TabTitle>
          <CrossIcon />
        </ActiveTab>
        <IdleTab>
          <YoutubeIcon />
          <FadingTitle>(34) animal crossing now lofi - YouTube</FadingTitle>
        </IdleTab>
        <TabDivider />
        <NewTab>
          <PlusIcon />
        </NewTab>
        <WindowControls>
          <Caption d="M.8 4l6.200 6.200L13.200 4" />
          <Caption d="M.5 7h13" />
          <Caption d="M2.500.6h8a3 3 0 0 1 3 3v8M2.500 2.600h7a2 2 0 0 1 2 2v7a2 2 0 0 1-2 2h-7a2 2 0 0 1-2-2v-7a2 2 0 0 1 2-2z" />
          <Caption d="M.8.8l12.400 12.400M13.200.8L.8 13.200" />
        </WindowControls>
      </TabStrip>
      <Toolbar>
        <NavButtons>
          <BackIcon color="#303336" />
          <BackIcon color="#b9babb" flip />
          <ReloadIcon />
          <BookmarkSlot>
            <BookmarkIcon />
          </BookmarkSlot>
        </NavButtons>
        <AddressBar>
          <LockIcon />
          <Url>
            <Domain>toeic-testpro.com</Domain>/study/test/test-4-62b6ca67bbc57b27fe110447/
          </Url>
          <ShareIcon />
          <AddressDivider />
          <ShieldButton $w={29} $right={13}>
            <BraveGlyph size={22} />
            <CountBadge $bg="#5e6175">3</CountBadge>
          </ShieldButton>
          <ShieldButton $w={29}>
            <BatIcon />
            <CountBadge $bg="#fb542b">1</CountBadge>
          </ShieldButton>
        </AddressBar>
        <ToolbarActions>
          <MdExtension size={21} color="#34373a" />
          <ActionSlot $gap={20}><PanelIcon /></ActionSlot>
          <ActionSlot $gap={22}><WalletIcon /></ActionSlot>
          <ActionSlot $gap={27}><MenuIcon /></ActionSlot>
        </ToolbarActions>
      </Toolbar>

      <Viewport>
        <Page>
          <Header>
            <Brand>
              <Logo />
            </Brand>
            <StoreBadge $w={249} $pad={28} $gap={10}>
              <PlayIcon />
              <StoreText>
                <StoreHint $ls={-0.2}>GET IT ON</StoreHint>
                <StoreName $ls={0.42}>Google Play</StoreName>
              </StoreText>
            </StoreBadge>
            <StoreBadge $w={248} $pad={18} $gap={6}>
              <FaApple size={53} />
              <StoreText>
                <StoreHint $ls={0.9}>Download on the</StoreHint>
                <StoreName $ls={0.35}>App  Store</StoreName>
              </StoreText>
            </StoreBadge>
            <HeaderNav>
              <HomeLink>Home</HomeLink>
              <AvatarIcon />
            </HeaderNav>
          </Header>

          <PageTitle>TEST 4</PageTitle>
          <Columns>
            <Sidebar>
              <TestTab>TEST 4</TestTab>
              <PaletteCard>
                <PaletteHead>
                  <PaletteTitle>Question Palette</PaletteTitle>
                  <RoundButton><ArrowIcon /></RoundButton>
                  <RoundButton><ArrowIcon next /></RoundButton>
                </PaletteHead>
                <QuestionGrid>
                  {Array.from({ length: QUESTION_COUNT }, (_, i) => i + 1).map((n) => (
                    <Question key={n} $ok={!WRONG.has(n)} $current={n === 1}>
                      {n}
                    </Question>
                  ))}
                </QuestionGrid>
                <Progress>
                  <ProgressBar />
                  <ProgressCount>200/200</ProgressCount>
                </Progress>
              </PaletteCard>
            </Sidebar>

            <ResultCard>
              <Timer>
                <AlarmIcon />
                <TimeSpent>00:19:46</TimeSpent>
              </Timer>
              <Congrats>Congratulations</Congrats>
              <ScoreTable>
                <Sections>
                  {SECTIONS.map((s) => (
                    <Section key={s.name}>
                      <Tag>
                        <TagName $ls={s.ls}>{s.name}</TagName>
                        <TagScore>{s.correct}/100</TagScore>
                      </Tag>
                      <Meter>
                        <MeterFill style={{ width: `${((s.score - MIN_SCORE) / (MAX_SCORE - MIN_SCORE)) * 100}%` }}>
                          <Bubble>{s.score}</Bubble>
                        </MeterFill>
                      </Meter>
                      <Bounds>
                        <span>{MIN_SCORE}</span>
                        <span>{MAX_SCORE}</span>
                      </Bounds>
                    </Section>
                  ))}
                </Sections>
                <Total>
                  <TotalLabel>TOTAL SCORE</TotalLabel>
                  <Gauge>
                    <GaugeRing />
                    <TotalValue>{TOTAL}</TotalValue>
                  </Gauge>
                </Total>
              </ScoreTable>
              <Actions>
                <PillButton $ls={0.95}>TRY AGAIN</PillButton>
                <PillButton $solid $ls={1.1}>REVIEW</PillButton>
              </Actions>
            </ResultCard>
          </Columns>
        </Page>
        <ScrollTrack>
          <ScrollThumb />
        </ScrollTrack>
      </Viewport>

      <TaskbarRow>
        {PINNED.map((p) => (
          <TaskItem key={p.id}>
            <TaskTile $active={p.active}>{p.icon}</TaskTile>
            {p.running && <RunMark $active={p.active} />}
          </TaskItem>
        ))}
        <Tray>
          <TrayIcons>
            <ChevronUp />
            <ActionSlot $gap={6}><WifiIcon /></ActionSlot>
            <VolumeIcon />
            <BatteryIcon />
          </TrayIcons>
          <Clock>
            <Time>09:23</Time>
            <DateText>18/11/2022</DateText>
          </Clock>
          <NoticeCount>9</NoticeCount>
        </Tray>
      </TaskbarRow>
    </Screen>
  );
}
